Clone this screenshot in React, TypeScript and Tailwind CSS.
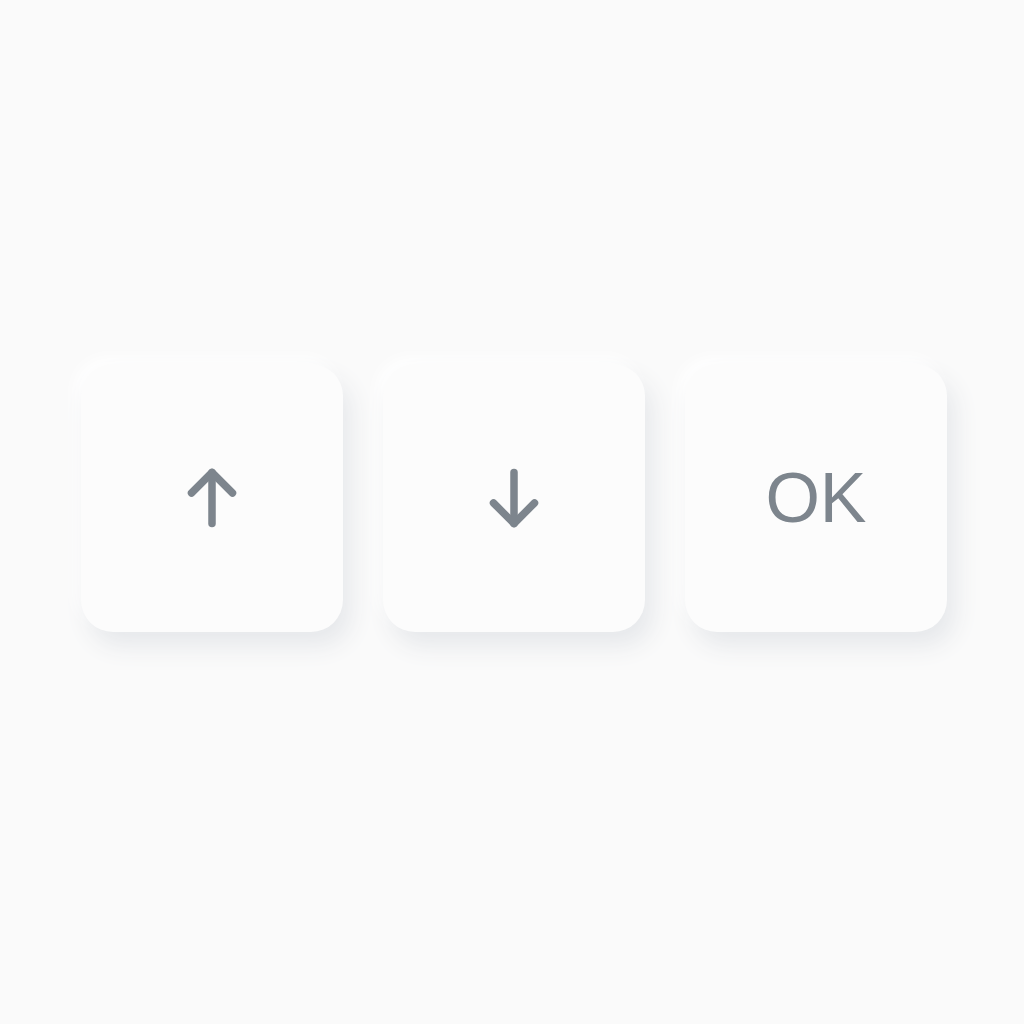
import React from "react";

const ArrowUp = () => (
  <svg width="56" height="66" viewBox="0 0 56 66" fill="none" stroke="#7d858d" strokeWidth="7.5" strokeLinecap="round" strokeLinejoin="round">
    <path d="M28 7.5V58.5" />
    <path d="M7.5 28L28 7.5L48.5 28" />
  </svg>
);

const ArrowDown = () => (
  <svg width="56" height="66" viewBox="0 0 56 66" fill="none" stroke="#7d858d" strokeWidth="7.5" strokeLinecap="round" strokeLinejoin="round">
    <path d="M28 7.5V58.5" />
    <path d="M7.5 38L28 58.5L48.5 38" />
  </svg>
);

const Key: React.FC<{ children: React.ReactNode }> = ({ children }) => (
  <button className="w-[262px] h-[268px] rounded-[32px] bg-[#fcfcfc] flex items-center justify-center shadow-[8px_14px_24px_#e6e8eb,-6px_-6px_16px_#ffffff]">
    {children}
  </button>
);

export default function App() {
  return (
    <div className="min-h-screen w-full bg-[#fafafa] flex items-center justify-center pb-7">
      <div className="flex gap-[40px] pl-[4px]">
        <Key>
          <ArrowUp />
        </Key>
        <Key>
          <ArrowDown />
        </Key>
        <Key>
          <span className="text-[70px] leading-none text-[#7d858d] font-['Liberation_Sans',Arial,sans-serif]">OK</span>
        </Key>
      </div>
    </div>
  );
}
